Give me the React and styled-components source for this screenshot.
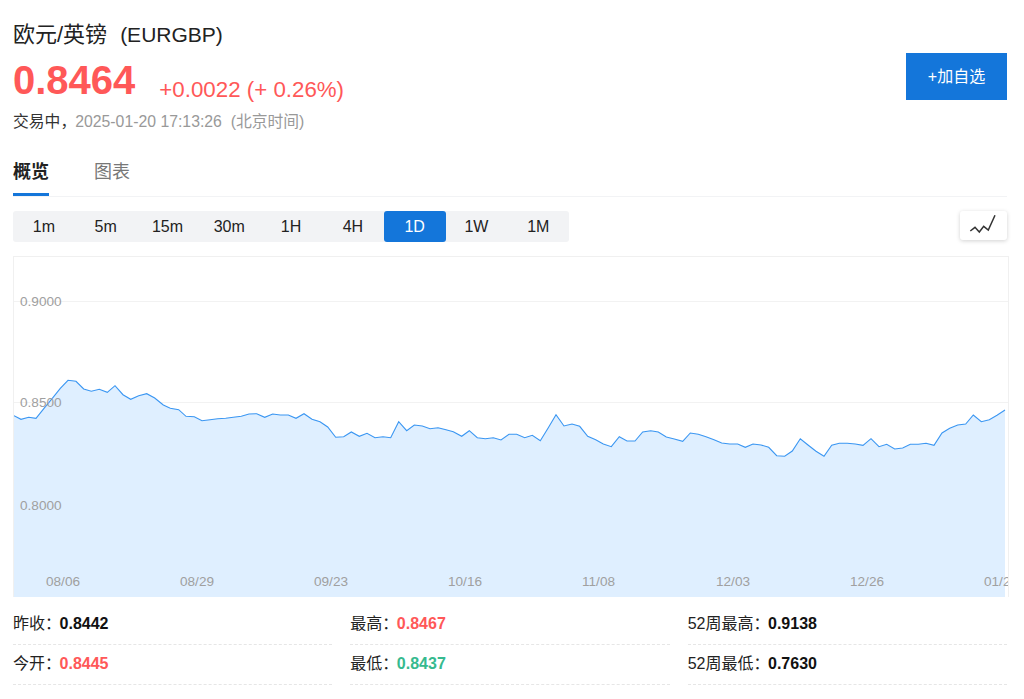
import React from "react";
import styled, { createGlobalStyle } from "styled-components";

const GlobalStyle = createGlobalStyle`
  html, body {
    margin: 0;
    padding: 0;
    background: #fff;
    font-family: "Liberation Sans", "Noto Sans CJK SC", sans-serif;
  }
`;

const Page = styled.div`
  width: 1024px;
  height: 699px;
  overflow: hidden;
  box-sizing: border-box;
  padding: 0 15px 0 13px;
`;

const Header = styled.header`
  display: flex;
  justify-content: space-between;
  align-items: flex-start;
  width: 994px;
  height: 149px;
`;

const Title = styled.h1`
  margin: 0;
  padding-top: 19px;
  font-size: 22px;
  line-height: 32px;
  font-weight: 400;
  color: #222;
`;

const TitleCode = styled.span`
  font-size: 21px;
  margin-left: 13px;
`;

const PriceRow = styled.div`
  display: flex;
  align-items: flex-start;
  margin-top: 4px;
  height: 50px;
  color: #ff5858;
`;

const Price = styled.span`
  font-size: 40px;
  line-height: 50px;
  font-weight: 700;
  margin-right: 24px;
`;

const Change = styled.span`
  font-size: 22.3px;
  line-height: 50px;
  margin-top: 10px;
`;

const Status = styled.div`
  font-size: 15.8px;
  line-height: 22px;
  margin-top: 6px;
  color: #999;
`;

const StatusLabel = styled.span`
  color: #333;
  margin-right: -1px;
`;

const FollowButton = styled.button`
  width: 101px;
  height: 47px;
  margin-top: 53px;
  border: 0;
  background: #1476da;
  color: #fff;
  font: inherit;
  font-size: 16px;
  padding: 0 0 3px 0;
`;

const TabBar = styled.nav`
  display: flex;
  gap: 45px;
  width: 994px;
  height: 47px;
  border-bottom: 1px solid #f2f3f5;
`;

const Tab = styled.div`
  width: 36px;
  height: 33px;
  padding-top: 11px;
  font-size: 18px;
  line-height: 24px;
  font-weight: ${(p) => (p.$active ? 700 : 400)};
  color: ${(p) => (p.$active ? "#222" : "#777")};
  border-bottom: 3px solid ${(p) => (p.$active ? "#1476da" : "transparent")};
`;

const Toolbar = styled.div`
  display: flex;
  justify-content: space-between;
  align-items: flex-start;
  width: 994px;
  margin-top: 14px;
  height: 45px;
`;

const Periods = styled.div`
  display: flex;
  background: #f2f3f5;
  border-radius: 3px;
`;

const Period = styled.div`
  width: 61.8px;
  height: 31px;
  line-height: 31px;
  text-align: center;
  font-size: 16px;
  border-radius: 3px;
  color: ${(p) => (p.$active ? "#fff" : "#222")};
  background: ${(p) => (p.$active ? "#1476da" : "transparent")};
`;

const ChartSwitch = styled.div`
  width: 47px;
  height: 29px;
  border-radius: 3px;
  background: #fff;
  box-shadow: 0 1px 4px rgba(0, 0, 0, 0.18);
`;

const ChartFrame = styled.div`
  width: 996px;
  height: 341px;
  box-sizing: border-box;
  border: 1px solid #f0f0f0;
  border-bottom: 0;
  overflow: hidden;
`;

const ChartSvg = styled.svg`
  display: block;
  font-family: "Liberation Sans", sans-serif;
  font-size: 13.6px;
`;

const Stats = styled.div`
  display: grid;
  grid-template-columns: repeat(3, 1fr);
  column-gap: 18px;
  width: 994px;
  margin-top: 8px;
`;

const Stat = styled.div`
  height: 39px;
  line-height: 37px;
  font-size: 16px;
  color: #222;
  border-bottom: 1px dashed #e6e6e6;
  white-space: nowrap;
`;

const StatValue = styled.b`
  font-family: "Liberation Sans", sans-serif;
  margin-left: -1.5px;
  color: ${(p) => p.$color || "#111"};
`;

const periods = ["1m", "5m", "15m", "30m", "1H", "4H", "1D", "1W", "1M"];

const stats = [
  { label: "昨收", value: "0.8442" },
  { label: "最高", value: "0.8467", color: "#ff5858" },
  { label: "52周最高", value: "0.9138" },
  { label: "今开", value: "0.8445", color: "#ff5858" },
  { label: "最低", value: "0.8437", color: "#36ba8f" },
  { label: "52周最低", value: "0.7630" },
];

// points read off the reference, in 3x crop coordinates
const partA = [[42,167],[63,178],[86,172],[108,175],[132,145],[157,115],[181,85],[204,61],[228,64],[251,87],[274,94],[298,88],[322,97],[345,77],[369,104],[392,118],[416,107],[440,101],[464,114],[490,135],[511,145],[536,149],[558,169],[583,170],[606,182],[630,179],[653,176],[677,175],[700,172],[724,169],[747,162],[770,161],[794,172],[818,162],[841,165],[865,165],[888,175],[912,161],[936,178],[960,185],[983,201],[1007,232]];
const partB = [[11,140],[34,126],[58,139],[81,130],[105,143],[129,140],[152,143],[176,95],[200,122],[223,105],[247,108],[270,116],[294,113],[318,119],[340,125],[365,139],[388,122],[412,143],[436,146],[460,143],[483,150],[507,133],[530,133],[554,143],[577,136],[601,152],[625,113],[648,74],[672,108],[696,102],[719,109],[743,139],[767,149],[790,162],[814,170],[838,140],[861,153],[885,153],[908,126],[932,122],[955,126],[979,141],[1003,147]];
const partC = [[8,154],[31,129],[55,133],[78,140],[102,149],[125,159],[149,162],[173,162],[196,172],[219,162],[243,165],[266,172],[290,197],[314,199],[337,183],[361,146],[384,165],[408,184],[432,199],[455,166],[478,160],[502,160],[526,162],[549,166],[573,146],[597,170],[620,163],[644,177],[668,174],[691,163],[715,163],[738,160],[762,166],[786,129],[809,115],[833,105],[857,102],[880,75],[904,95],[928,89],[951,76],[975,60]];

// frame content starts at page (14, 257)
const toChart = (pts, ox, oy) => pts.map(([x, y]) => [ox + x / 3 - 14, oy + y / 3 - 257]);
const points = [
  ...toChart(partA, 0, 360),
  ...toChart(partB, 340, 390),
  ...toChart(partC, 680, 390),
];
const line = points.map(([x, y]) => `${x.toFixed(1)},${y.toFixed(1)}`).join(" ");
const lastX = points[points.length - 1][0].toFixed(1);
const area = `0,340 ${line} ${lastX},340`;

const yLabels = [
  { text: "0.9000", y: 49 },
  { text: "0.8500", y: 150 },
  { text: "0.8000", y: 253 },
];
const xLabels = [
  { text: "08/06", x: 32 },
  { text: "08/29", x: 166 },
  { text: "09/23", x: 300 },
  { text: "10/16", x: 434 },
  { text: "11/08", x: 568 },
  { text: "12/03", x: 702 },
  { text: "12/26", x: 836 },
  { text: "01/20", x: 970 },
];

const Chart = () => (
  <ChartSvg width="994" height="340" viewBox="0 0 994 340">
    <line x1="0" x2="994" y1="44.5" y2="44.5" stroke="#f2f2f2" />
    <line x1="0" x2="994" y1="145.5" y2="145.5" stroke="#f2f2f2" />
    <polygon points={area} fill="#dfefff" />
    <polyline points={line} fill="none" stroke="#3a96f2" strokeWidth="1.1" />
    {yLabels.map((l) => (
      <text key={l.text} x="6" y={l.y} fill="#a0a0a0">
        {l.text}
      </text>
    ))}
    {xLabels.map((l) => (
      <text key={l.text} x={l.x} y="329" fill="#a0a0a0">
        {l.text}
      </text>
    ))}
  </ChartSvg>
);

const App = () => (
  <Page>
    <GlobalStyle />
    <Header>
      <div>
        <Title>
          欧元/英镑<TitleCode>(EURGBP)</TitleCode>
        </Title>
        <PriceRow>
          <Price>0.8464</Price>
          <Change>+0.0022 (+ 0.26%)</Change>
        </PriceRow>
        <Status>
          <StatusLabel>交易中，</StatusLabel>2025-01-20 17:13:26&nbsp;&nbsp;(北京时间)
        </Status>
      </div>
      <FollowButton>+加自选</FollowButton>
    </Header>
    <TabBar>
      <Tab $active>概览</Tab>
      <Tab>图表</Tab>
    </TabBar>
    <Toolbar>
      <Periods>
        {periods.map((p) => (
          <Period key={p} $active={p === "1D"}>
            {p}
          </Period>
        ))}
      </Periods>
      <ChartSwitch>
        <svg width="47" height="29" viewBox="0 0 47 29" fill="none" stroke="#333" strokeWidth="1.5">
          <path d="M10.3 20 L15 16.3 L19.3 21 L23.7 15.3 L28.3 19 L35 4.3" />
        </svg>
      </ChartSwitch>
    </Toolbar>
    <ChartFrame>
      <Chart />
    </ChartFrame>
    <Stats>
      {stats.map((s) => (
        <Stat key={s.label}>
          {s.label}：<StatValue $color={s.color}>{s.value}</StatValue>
        </Stat>
      ))}
    </Stats>
  </Page>
);

export default App;
